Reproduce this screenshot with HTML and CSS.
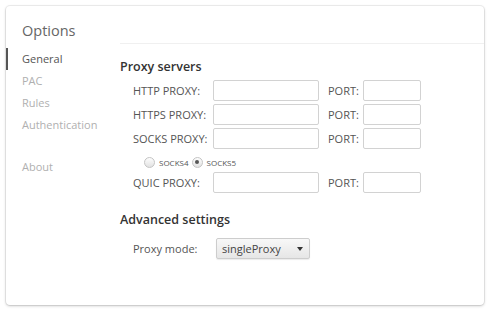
FILE: index.html
```html
<!DOCTYPE html>
<html>
<head>
<meta charset="utf-8">
<link rel="stylesheet" href="styles.css">
</head>
<body>
<div class="card">
  <aside class="sidebar">
    <h1 class="title">Options</h1>
    <nav class="nav">
      <div class="nav-item active">General</div>
      <div class="nav-item">PAC</div>
      <div class="nav-item">Rules</div>
      <div class="nav-item">Authentication</div>
      <div class="nav-item about">About</div>
    </nav>
  </aside>
  <main class="main">
    <h2 class="section">Proxy servers</h2>
    <div class="row">
      <span class="label">HTTP PROXY:</span><span class="input host"></span>
      <span class="port-label">PORT:</span><span class="input port"></span>
    </div>
    <div class="row">
      <span class="label">HTTPS PROXY:</span><span class="input host"></span>
      <span class="port-label">PORT:</span><span class="input port"></span>
    </div>
    <div class="row">
      <span class="label">SOCKS PROXY:</span><span class="input host"></span>
      <span class="port-label">PORT:</span><span class="input port"></span>
    </div>
    <div class="radios">
      <span class="radio"></span><span class="radio-text">socks4</span>
      <span class="radio checked"></span><span class="radio-text">socks5</span>
    </div>
    <div class="row">
      <span class="label">QUIC PROXY:</span><span class="input host"></span>
      <span class="port-label">PORT:</span><span class="input port"></span>
    </div>
    <h2 class="section adv">Advanced settings</h2>
    <div class="row mode">
      <span class="label mode-label">Proxy mode:</span>
      <span class="select">singleProxy<span class="arrow"></span></span>
    </div>
  </main>
</div>
</body>
</html>
```

FILE: styles.css
```css
* { box-sizing: border-box; }
html, body { margin: 0; background: #fff; }
body {
  padding: 6px 9px 10px 6px;
  font-family: "Open Sans", "DejaVu Sans", sans-serif;
}
.card {
  display: flex;
  width: 478px;
  height: 299px;
  border-radius: 4px;
  background: #fff;
  box-shadow: 0 0 0 1px rgba(0,0,0,0.06), 0 1px 3px rgba(0,0,0,0.22);
}
.sidebar {
  width: 114px;
  flex: none;
}
.title {
  margin: 0;
  padding: 16px 0 0 16px;
  height: 42px;
  font-size: 14.5px;
  font-weight: 400;
  color: #666;
  line-height: 18px;
}
.nav { display: flex; flex-direction: column; }
.nav-item {
  height: 22px;
  line-height: 22px;
  padding-left: 16px;
  font-size: 11px;
  color: #b0b0b0;
}
.nav-item.active {
  color: #555;
  border-left: 2px solid #555;
  padding-left: 14px;
}
.nav-item.about { margin-top: 20px; }
.main {
  flex: 1;
  border-top: 1px solid #f0f0f0;
  margin-top: 37px;
  padding-top: 14px;
}
.section {
  margin: 0 0 4px 0;
  font-size: 12.5px;
  font-weight: 600;
  color: #333;
  line-height: 18px;
}
.row {
  display: flex;
  align-items: center;
  height: 20px;
  margin-bottom: 4px;
  padding-left: 13px;
}
.label {
  width: 80px;
  font-size: 11px;
  color: #555;
}
.mode-label { width: 83px; }
.input {
  display: block;
  height: 21px;
  border: 1px solid #d2d2d2;
  border-radius: 2px;
  background: #fff;
}
.host { width: 106px; }
.port-label {
  font-size: 11px;
  color: #555;
  margin-left: 9px;
  width: 35px;
}
.port { width: 58px; }
.radios {
  display: flex;
  align-items: center;
  height: 20px;
  padding-left: 24px;
  margin-top: 1px;
}
.radio {
  width: 11px;
  height: 11px;
  border-radius: 50%;
  border: 1px solid #c4c4c4;
  background: linear-gradient(#fdfdfd, #e2e2e2);
  margin-right: 4px;
  position: relative;
}
.radio.checked::after {
  content: "";
  position: absolute;
  left: 2.5px;
  top: 2.5px;
  width: 4px;
  height: 4px;
  border-radius: 50%;
  background: #555;
}
.radio-text {
  font-size: 8px;
  color: #555;
  text-transform: uppercase;
  margin-right: 3px;
}
.section.adv { margin-top: 19px; margin-bottom: 9px; }
.row.mode { height: 21px; }
.select {
  position: relative;
  display: flex;
  align-items: center;
  width: 94px;
  height: 21px;
  padding-left: 5px;
  border: 1px solid #cdcdcd;
  border-radius: 2px;
  background: linear-gradient(#f8f8f8, #e6e6e6);
  box-shadow: 0 1px 1px rgba(0,0,0,0.08);
  font-size: 11px;
  color: #444;
}
.arrow {
  position: absolute;
  right: 6px;
  top: 8px;
  width: 0;
  height: 0;
  border-left: 3.5px solid transparent;
  border-right: 3.5px solid transparent;
  border-top: 4px solid #333;
}
```
